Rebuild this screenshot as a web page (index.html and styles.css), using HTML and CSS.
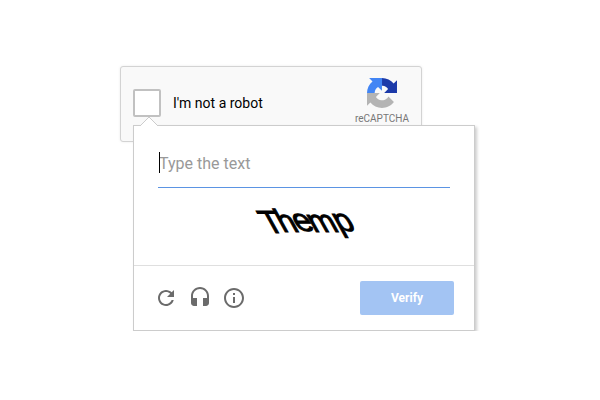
FILE: index.html
```html
<!DOCTYPE html>
<html lang="en">
<head>
<meta charset="utf-8">
<meta name="viewport" content="width=device-width, initial-scale=1">
<title>I'm not a robot</title>
<link rel="stylesheet" href="styles.css">
</head>
<body>
<main class="widget">
  <section class="anchor">
    <label class="check"><input class="check-box" type="checkbox">I'm not a robot</label>
    <div class="brand">
      <svg class="brand-logo" viewBox="0 0 64 64" aria-hidden="true">
        <path fill="#1c3aa9" d="M64 31.955l-.033-1.37V4.687l-7.16 7.16C50.948 4.674 42.033.093 32.05.093V16.355c.485 0 .86.057 1.135.163 4.976.393 9.288 3.14 11.828 7.124l-8.307 8.307L64 31.953"/>
        <path fill="#4285f4" d="M32.05.094H4.594l7.16 7.16C4.58 13.147 0 22.06 0 32.046h16.26c0-.485.057-.86.163-1.135.393-4.976 3.14-9.288 7.124-11.828l8.307 8.307z"/>
        <path fill="#b4b4b4" d="M.001 32.045l.033 1.37v25.898l7.16-7.16c5.86 7.173 14.774 11.754 24.76 11.754 10.4 0 19.622-4.96 25.458-12.64l-11.736-11.86a15.55 15.55 0 0 1-4.754 5.334c-2.05 1.6-4.952 2.906-8.968 2.906-.485 0-.86-.057-1.135-.163-4.976-.393-9.288-3.14-11.828-7.124l8.307-8.307c-10.522.04-22.4.066-27.295-.005"/>
      </svg>
      <span class="brand-name">reCAPTCHA</span>
    </div>
  </section>

  <form class="challenge">
    <svg class="pointer" viewBox="0 0 18 10" aria-hidden="true"><path d="M0 10L9 1l9 9" fill="#fff" stroke="#ccc"/></svg>
    <div class="challenge-body">
      <div class="field">
        <input class="answer" type="text" placeholder="Type the text" aria-label="Type the text">
        <span class="caret"></span>
      </div>
      <svg class="word" viewBox="0 0 140 40" role="img" aria-label="Themp">
        <text class="word-text" transform="translate(33 30) skewX(29)" x="0 16 32 47 73" y="1 0 -1 0 -1">Themp</text>
      </svg>
    </div>
    <div class="challenge-footer">
      <div class="tools">
        <button class="tool" type="button" aria-label="Reload"><svg class="tool-icon" viewBox="0 0 24 24"><path d="M17.65 6.35C16.2 4.9 14.21 4 12 4c-4.42 0-7.99 3.58-7.99 8s3.57 8 7.99 8c3.73 0 6.84-2.55 7.73-6h-2.08c-.82 2.33-3.04 4-5.65 4-3.31 0-6-2.69-6-6s2.69-6 6-6c1.66 0 3.14.69 4.22 1.78L13 11h7V4l-2.35 2.35z"/></svg></button>
        <button class="tool" type="button" aria-label="Audio"><svg class="tool-icon" viewBox="0 0 24 24"><path d="M12 1c-4.97 0-9 4.03-9 9v7c0 1.66 1.34 3 3 3h3v-8H5v-2c0-3.87 3.13-7 7-7s7 3.13 7 7v2h-4v8h3c1.66 0 3-1.34 3-3v-7c0-4.97-4.03-9-9-9z"/></svg></button>
        <button class="tool" type="button" aria-label="Help"><svg class="tool-icon" viewBox="0 0 24 24"><path d="M11 17h2v-6h-2v6zm1-15C6.48 2 2 6.48 2 12s4.48 10 10 10 10-4.48 10-10S17.52 2 12 2zm0 18c-4.41 0-8-3.59-8-8s3.59-8 8-8 8 3.59 8 8-3.59 8-8 8zM11 9h2V7h-2v2z"/></svg></button>
      </div>
      <button class="verify" type="submit">Verify</button>
    </div>
  </form>
</main>
</body>
</html>
```
FILE: styles.css
```css
* {
  box-sizing: border-box;
}

body {
  margin: 0;
  padding: 66px 5px 0 0;
  background: #fff;
  font-family: Roboto, "Liberation Sans", sans-serif;
}

.widget {
  max-width: 355px;
  margin: 0 auto;
}

.anchor {
  display: flex;
  justify-content: space-between;
  align-items: center;
  max-width: 302px;
  padding: 11px 12px 13px;
  border: 1px solid #d3d3d3;
  border-radius: 3px;
  background: #f9f9f9;
  box-shadow: 0 0 3px rgba(0, 0, 0, 0.08);
}

.check {
  display: flex;
  align-items: center;
  gap: 12px;
  font-size: 14px;
  line-height: 20px;
  color: #000;
}

.check-box {
  appearance: none;
  width: 28px;
  height: 28px;
  margin: 0;
  border: 2px solid #c1c1c1;
  border-radius: 2px;
  background: #fff;
}

.brand {
  display: flex;
  flex-direction: column;
  align-items: center;
  gap: 5px;
  padding-bottom: 3px;
}

.brand-logo {
  width: 30px;
  height: 30px;
}

.brand-name {
  font-size: 10px;
  line-height: 12px;
  color: #777;
}

.challenge {
  position: relative;
  margin: -17px 0 0 13px;
  border: 1px solid #ccc;
  background: #fff;
  box-shadow: 2px 2px 3px rgba(0, 0, 0, 0.2);
}

.pointer {
  position: absolute;
  top: -10px;
  left: 6px;
  width: 18px;
  height: 10px;
}

.challenge-body {
  display: flex;
  flex-direction: column;
  align-items: center;
  gap: 14px;
  padding: 24px 24px 23px;
}

.field {
  position: relative;
  width: 100%;
}

.answer {
  display: block;
  width: 100%;
  height: 38px;
  padding: 0 1px 11px;
  border: 0;
  border-bottom: 1px solid #5b94e3;
  outline: 0;
  background: transparent;
  font: 16px/24px Roboto, "Liberation Sans", sans-serif;
  color: #000;
}

.answer::placeholder {
  color: #999;
  opacity: 1;
}

.caret {
  position: absolute;
  top: 2px;
  left: 1px;
  width: 1px;
  height: 21px;
  background: #000;
}

.word {
  width: 140px;
  height: 40px;
  overflow: visible;
}

.word-text {
  font: 32px "Liberation Sans", sans-serif;
  fill: #000;
  stroke: #000;
  stroke-width: 1px;
}

.challenge-footer {
  display: flex;
  justify-content: space-between;
  align-items: center;
  padding: 15px 20px;
  border-top: 1px solid #dfdfdf;
}

.tools {
  display: flex;
  gap: 10px;
}

.tool {
  display: block;
  padding: 0;
  border: 0;
  background: none;
}

.tool-icon {
  display: block;
  width: 24px;
  height: 24px;
  fill: #6b6b6b;
}

.verify {
  width: 94px;
  height: 34px;
  border: 0;
  border-radius: 2px;
  background: #a3c4f3;
  font: bold 12px/16px Roboto, "Liberation Sans", sans-serif;
  color: #fff;
}
```
